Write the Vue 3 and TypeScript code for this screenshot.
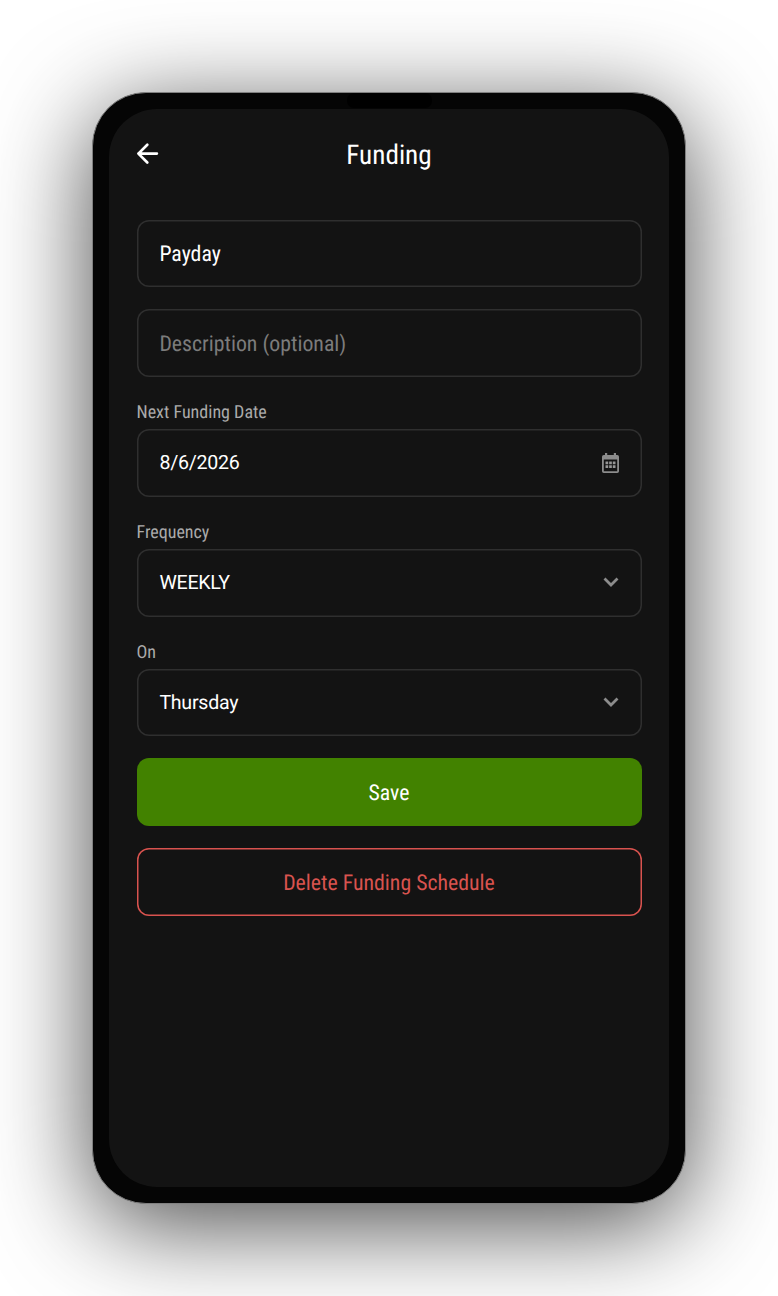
<script setup lang="ts">
const day = 'Thursday'
</script>

<template>
  <div class="page">
    <div class="phone">
      <div class="notch"></div>
      <div class="screen">
        <header class="top">
          <svg class="back" width="24" height="24" viewBox="0 0 24 24" fill="none" stroke="#fff" stroke-width="2.7" stroke-linecap="round" stroke-linejoin="round">
            <path d="M21.900 11.600H3.400M12.300 2.700L3.400 11.600l8.900 8.900" />
          </svg>
          <h1 class="title">Funding</h1>
        </header>
        <form class="form">
          <div class="field cond">Payday</div>
          <div class="field cond placeholder">Description (optional)</div>
          <div class="group">
            <div class="label">Next Funding Date</div>
            <div class="field plain">
              <span>8/6/2026</span>
              <svg class="cal" width="17" height="20" viewBox="0 0 17 20">
                <path fill="#8c8c8c" fill-rule="evenodd" d="M3 0h2.200v2h6.600V0H14v2h1.200A1.800 1.800 0 0 1 17 3.800v14.400a1.800 1.800 0 0 1-1.800 1.800H1.800A1.800 1.800 0 0 1 0 18.200V3.800A1.800 1.800 0 0 1 1.800 2H3zM1.800 6.500v11.700h13.400V6.500z" />
                <path fill="#969696" d="M3.500 8.500h2.700v2.700H3.500zM7.150 8.500h2.700v2.700h-2.700zM10.800 8.500h2.700v2.700h-2.700zM3.500 12.300h2.700V15H3.500zM7.150 12.300h2.700V15h-2.700zM10.800 12.300h2.700V15h-2.700z" />
              </svg>
            </div>
          </div>
          <div class="group">
            <div class="label">Frequency</div>
            <div class="field plain">
              <span>WEEKLY</span>
              <svg class="chev" width="16" height="10" viewBox="0 0 16 10" fill="none" stroke="#8c8c8c" stroke-width="2.8">
                <path d="M1.500 1.500L8 8l6.500-6.500" />
              </svg>
            </div>
          </div>
          <div class="group">
            <div class="label">On</div>
            <div class="field plain">
              <span>{{ day }}</span>
              <svg class="chev" width="16" height="10" viewBox="0 0 16 10" fill="none" stroke="#8c8c8c" stroke-width="2.8">
                <path d="M1.500 1.500L8 8l6.500-6.500" />
              </svg>
            </div>
          </div>
          <button type="button" class="btn save">Save</button>
          <button type="button" class="btn del">Delete Funding Schedule</button>
        </form>
      </div>
    </div>
  </div>
</template>

<style>
html, body { margin: 0; background: #fff; }
</style>

<style scoped>
.page {
  width: 778px;
  height: 1296px;
  box-sizing: border-box;
  padding: 92px;
  overflow: hidden;
  font-family: Roboto, sans-serif;
  text-rendering: geometricPrecision;
  background: #fff;
}
.phone {
  position: relative;
  width: 594px;
  height: 1112px;
  box-sizing: border-box;
  padding: 16px;
  background: #050505;
  border: 1px solid #808080;
  border-radius: 54px;
  box-shadow: 0 20px 100px rgba(0, 0, 0, 0.72);
}
.notch {
  position: absolute;
  top: 0;
  left: 254px;
  width: 85px;
  height: 15px;
  background: #000;
  border-radius: 7px;
}
.screen {
  height: 1078px;
  background: #131313;
  border-radius: 48px;
  padding: 0 27.5px;
  box-sizing: border-box;
}
.top {
  position: relative;
  height: 110.6px;
  display: flex;
  align-items: center;
  justify-content: center;
  padding-bottom: 18px;
  box-sizing: border-box;
}
.back {
  position: absolute;
  left: -1.5px;
  top: 33px;
}
.title {
  margin: 0;
  font-size: 27.2px;
  font-weight: 400;
  font-stretch: 75%;
  color: #fff;
  line-height: 32px;
}
.form {
  display: flex;
  flex-direction: column;
  gap: 22.2px;
}
.group {
  display: flex;
  flex-direction: column;
  gap: 6.4px;
}
.label {
  font-size: 18px;
  line-height: 21px;
  padding-top: 3px;
  font-stretch: 75%;
  color: #aaa;
}
.field {
  height: 67.4px;
  box-sizing: border-box;
  box-shadow: inset 0 0 0 1.5px #2f2f2f;
  border-radius: 12px;
  padding: 0 22.9px;
  display: flex;
  align-items: center;
  justify-content: space-between;
  color: #fff;
  font-size: 19.6px;
  letter-spacing: -0.25px;
}
.chev { margin-bottom: 2px; }
.cond { font-size: 21.8px; font-stretch: 75%; letter-spacing: 0; padding-top: 3px; }
.placeholder { color: #7c7c7c; }
.btn {
  width: 100%;
  box-sizing: border-box;
  border-radius: 12px;
  font-family: Roboto, sans-serif;
  font-size: 21.8px;
  font-stretch: 75%;
  background: transparent;
  padding: 4px 0 0;
  text-rendering: geometricPrecision;
}
.save { height: 68.4px; margin-top: -1px; background: #428200; border: 0; color: #fff; }
.del { height: 67.4px; border: 0; box-shadow: inset 0 0 0 1.5px #d9534f; color: #d9534f; }
</style>
